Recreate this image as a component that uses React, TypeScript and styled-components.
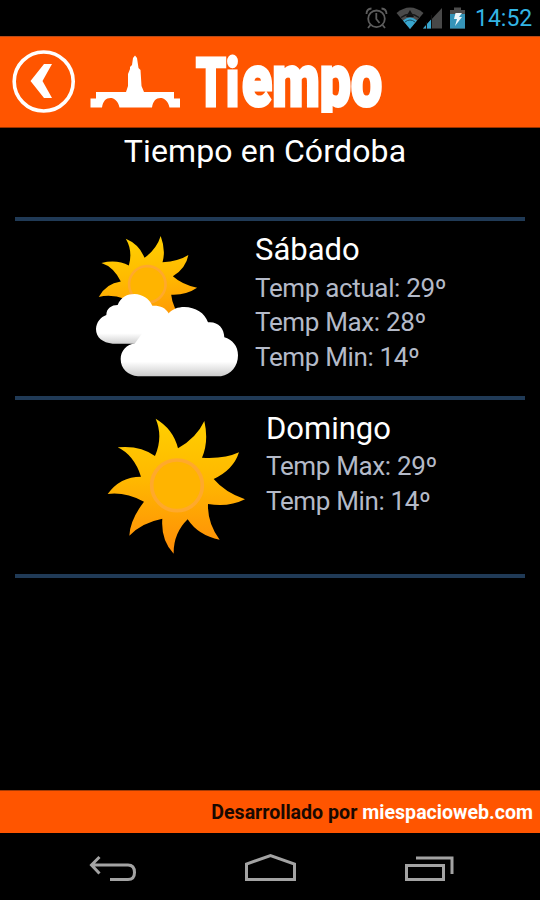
import React from "react";
import styled, { createGlobalStyle } from "styled-components";

const GlobalStyle = createGlobalStyle`
  body { margin: 0; background: #000; }
  * { box-sizing: border-box; }
  svg { display: block; flex: none; }
`;

const Screen = styled.div`
  width: 540px;
  height: 900px;
  display: flex;
  flex-direction: column;
  background: #000;
  color: #fff;
  font-family: Roboto, sans-serif;
  overflow: hidden;
`;

const StatusBar = styled.div`
  height: 36px;
  flex: none;
  display: flex;
  justify-content: flex-end;
  align-items: center;
  padding: 2px 8px 0 0;
`;

const Clock = styled.span`
  color: #33b5e5;
  width: 57px;
  margin-left: 8px;
  font-size: 23px;
  line-height: 34px;
  white-space: nowrap;
`;

const Header = styled.header`
  height: 92px;
  flex: none;
  display: flex;
  background: #ff5500;
  border-top: 1px solid #b84a18;
  border-bottom: 1px solid #963300;
  padding-left: 10px;
`;

const Content = styled.main`
  flex: 1;
  padding: 0 15px;
`;

const City = styled.h1`
  margin: 0;
  height: 89px;
  padding: 4px 10px 0 0;
  font-size: 32px;
  line-height: 38px;
  font-weight: 400;
  letter-spacing: 0.15px;
  text-align: center;
  white-space: nowrap;
`;

const DayRow = styled.section<{ $indent: number }>`
  height: 178.5px;
  border-top: 4px solid #203a56;
  display: flex;
  padding-left: ${(p) => p.$indent}px;
`;

const Details = styled.div<{ $gap: number }>`
  margin-left: ${(p) => p.$gap}px;
  padding-top: 10px;
`;

const DayName = styled.h2`
  margin: 0 0 2.5px;
  font-size: 31px;
  line-height: 37px;
  font-weight: 400;
  white-space: nowrap;
`;

const Temp = styled.p`
  margin: 0;
  font-size: 26px;
  line-height: 34.5px;
  letter-spacing: -0.35px;
  color: #b4bac8;
  white-space: nowrap;
`;

const EndRule = styled.div`
  height: 4px;
  background: #203a56;
`;

const Footer = styled.footer`
  height: 43px;
  flex: none;
  background: #ff5500;
  border-top: 1px solid #a53a05;
  display: flex;
  justify-content: flex-end;
  align-items: center;
  gap: 5px;
  padding: 1px 7px 0 0;
  font-size: 19.6px;
  font-weight: 700;
`;

const Credit = styled.span`
  color: #190800;
`;

const NavBar = styled.nav`
  height: 67px;
  flex: none;
`;

const sunRays =
  "M197 41Q250 72 264 130Q320 98 343 48Q357 110 336 158Q405 162 447 142Q430 195 371 222Q405 262 465 283Q415 308 354 297Q352 355 389 404Q325 392 293 343Q250 385 251 446Q212 405 217 341Q155 353 118 392Q120 345 162 290Q105 260 53 267Q90 215 153 215Q132 150 83 127Q150 120 195 153Q220 95 197 41Z";

function Sun({ id }: { id: string }) {
  return (
    <>
      <defs>
        <linearGradient id={id} x1="0" y1="0" x2="0" y2="1">
          <stop offset="0" stopColor="#ffd000" />
          <stop offset="0.45" stopColor="#ffb800" />
          <stop offset="1" stopColor="#ff8c08" />
        </linearGradient>
      </defs>
      <path d={sunRays} fill={`url(#${id})`} />
      <circle cx="261" cy="241" r="76" fill="#ffb400" stroke="#ffa92c" strokeWidth="11" />
    </>
  );
}

function CloudySun() {
  return (
    <svg width="160" height="160" viewBox="0 0 480 480">
      <g transform="translate(-15 12)">
        <g transform="translate(202 178) rotate(-7.6) scale(.719) translate(-261 -241)">
          <Sun id="sun-small" />
        </g>
        <defs>
          <linearGradient id="cloud-back" gradientUnits="userSpaceOnUse" x1="0" y1="325" x2="0" y2="357">
            <stop offset="0" stopColor="#fff" />
            <stop offset="1" stopColor="#cfcfcf" />
          </linearGradient>
          <linearGradient id="cloud-front" gradientUnits="userSpaceOnUse" x1="0" y1="410" x2="0" y2="454">
            <stop offset="0" stopColor="#fff" />
            <stop offset="1" stopColor="#cacaca" />
          </linearGradient>
        </defs>
        <path
          d="M98 356C68 353 48 338 48 312C49 291 62 276 79 270C79 250 95 240 113 240C122 216 142 207 164 207C187 208 207 220 217 242C240 241 256 247 266 265L270 335L165 356Z"
          fill="url(#cloud-back)"
        />
        <path
          d="M174 454C144 451 122 432 122 402C122 378 140 358 165 355L190 320L266 265C278 252 294 246 313 246C347 247 374 263 384 292C414 289 432 309 433 337C457 344 474 363 474 391C474 425 453 448 423 454Z"
          fill="url(#cloud-front)"
        />
      </g>
    </svg>
  );
}

function Sunny() {
  return (
    <svg width="160" height="160" viewBox="0 0 480 480">
      <g transform="translate(-30 15)">
        <Sun id="sun-large" />
      </g>
    </svg>
  );
}

function StatusIcons() {
  return (
    <svg width="108" height="36" viewBox="360 1 108 36">
      <g fill="none" stroke="#5c5c5c" strokeWidth="1.8">
        <circle cx="377.5" cy="18.8" r="8.3" />
        <path d="M377.3 13V19L380.5 23M371.5 25L369 28M383.5 25L386 28" />
        <path d="M367.5 14C367.5 10.5 369.5 8.7 372.5 8.5M387.5 14C387.5 10.5 385.5 8.7 382.5 8.5" />
      </g>
      <path d="M397.500 13Q411 2 424.500 13L411 29Z" fill="#4a4a4a" />
      <path d="M411 10L415 17H407Z" fill="#111" />
      <path d="M404 20.500Q411 14.500 418 20.500L411 29Z" fill="#37a6cf" />
      <path d="M402 17.500Q411 11 420 17.500" fill="none" stroke="#171717" strokeWidth="1.400" />
      <path d="M406 22Q411 18 416 22" fill="none" stroke="#174b60" strokeWidth="1" />
      <path d="M443 8V28.500H424Z" fill="#484848" />
      <path d="M432 19.500V28.500H424Z" fill="#37a6cf" />
      <path d="M427.500 22V29M432.500 15V29" stroke="#111" strokeWidth="1" />
      <path d="M451 10H455V7.500H462V10H466V28.500H451Z" fill="#4c4c4c" />
      <path d="M451 14H466V28.500H451Z" fill="#3594b8" />
      <path d="M456.500 13H463L460 17H463L456 26L458 19H455Z" fill="#edf6fa" />
    </svg>
  );
}

function Brand() {
  return (
    <svg width="390" height="90" viewBox="10 37 390 90" role="img" aria-label="Tiempo">
      <circle cx="43.700" cy="81.500" r="29.500" fill="none" stroke="#fff" strokeWidth="3.600" />
      <path d="M44 64H52L42.500 81L52 98H44L30.500 81Z" fill="#fff" />
      <path
        d="M90.500 107.500V98.500H96V92H126L128 86V74L130 69V67L132 65L133 58L135 55.500L137 58L138.500 68L140.500 70L141.500 86L144 92H174V98.500H180V107.500H169.500C168 100.500 164 98 160.500 98C156 98 153 101 152 107.500H119.500C118 100.500 114 98 110.500 98C106 98 103 101 102 107.500Z"
        fill="#fff"
      />
      <defs>
        <clipPath id="title-area">
          <rect x="190" y="50" width="200" height="63" />
        </clipPath>
      </defs>
      <g clipPath="url(#title-area)">
        <text y="106" fontFamily="Roboto, sans-serif" fontWeight="900" fill="#fff" stroke="#fff" strokeWidth="3">
          <tspan x="196" fontSize="66" textLength="43" lengthAdjust="spacingAndGlyphs">Ti</tspan>
          <tspan x="242" fontSize="74" textLength="140" lengthAdjust="spacingAndGlyphs">empo</tspan>
        </text>
      </g>
    </svg>
  );
}

function NavIcons() {
  return (
    <svg width="540" height="67" viewBox="0 833 540 67" fill="none" stroke="#a3a3a3" strokeWidth="3">
      <path d="M91 858.500H128C133 858.500 134.500 862 134.500 866C134.500 870 132.500 873 128 873H110M99.500 850.500L91.500 858.500L99.500 867" transform="translate(0 6.500)" />
      <path d="M246.500 879.500V864L270.500 855.500L294.500 864V879.500Z" />
      <path d="M406.500 865.500H443.500V879.500H406.500ZM416 858H452V874" />
    </svg>
  );
}

export default function App() {
  return (
    <>
      <GlobalStyle />
      <Screen>
        <StatusBar>
          <StatusIcons />
          <Clock>14:52</Clock>
        </StatusBar>
        <Header>
          <Brand />
        </Header>
        <Content>
          <City>Tiempo en Córdoba</City>
          <DayRow $indent={70}>
            <CloudySun />
            <Details $gap={10}>
              <DayName>Sábado</DayName>
              <Temp>Temp actual: 29º</Temp>
              <Temp>Temp Max: 28º</Temp>
              <Temp>Temp Min: 14º</Temp>
            </Details>
          </DayRow>
          <DayRow $indent={85}>
            <Sunny />
            <Details $gap={6}>
              <DayName>Domingo</DayName>
              <Temp>Temp Max: 29º</Temp>
              <Temp>Temp Min: 14º</Temp>
            </Details>
          </DayRow>
          <EndRule />
        </Content>
        <Footer>
          <Credit>Desarrollado por</Credit>
          <span>miespacioweb.com</span>
        </Footer>
        <NavBar>
          <NavIcons />
        </NavBar>
      </Screen>
    </>
  );
}
